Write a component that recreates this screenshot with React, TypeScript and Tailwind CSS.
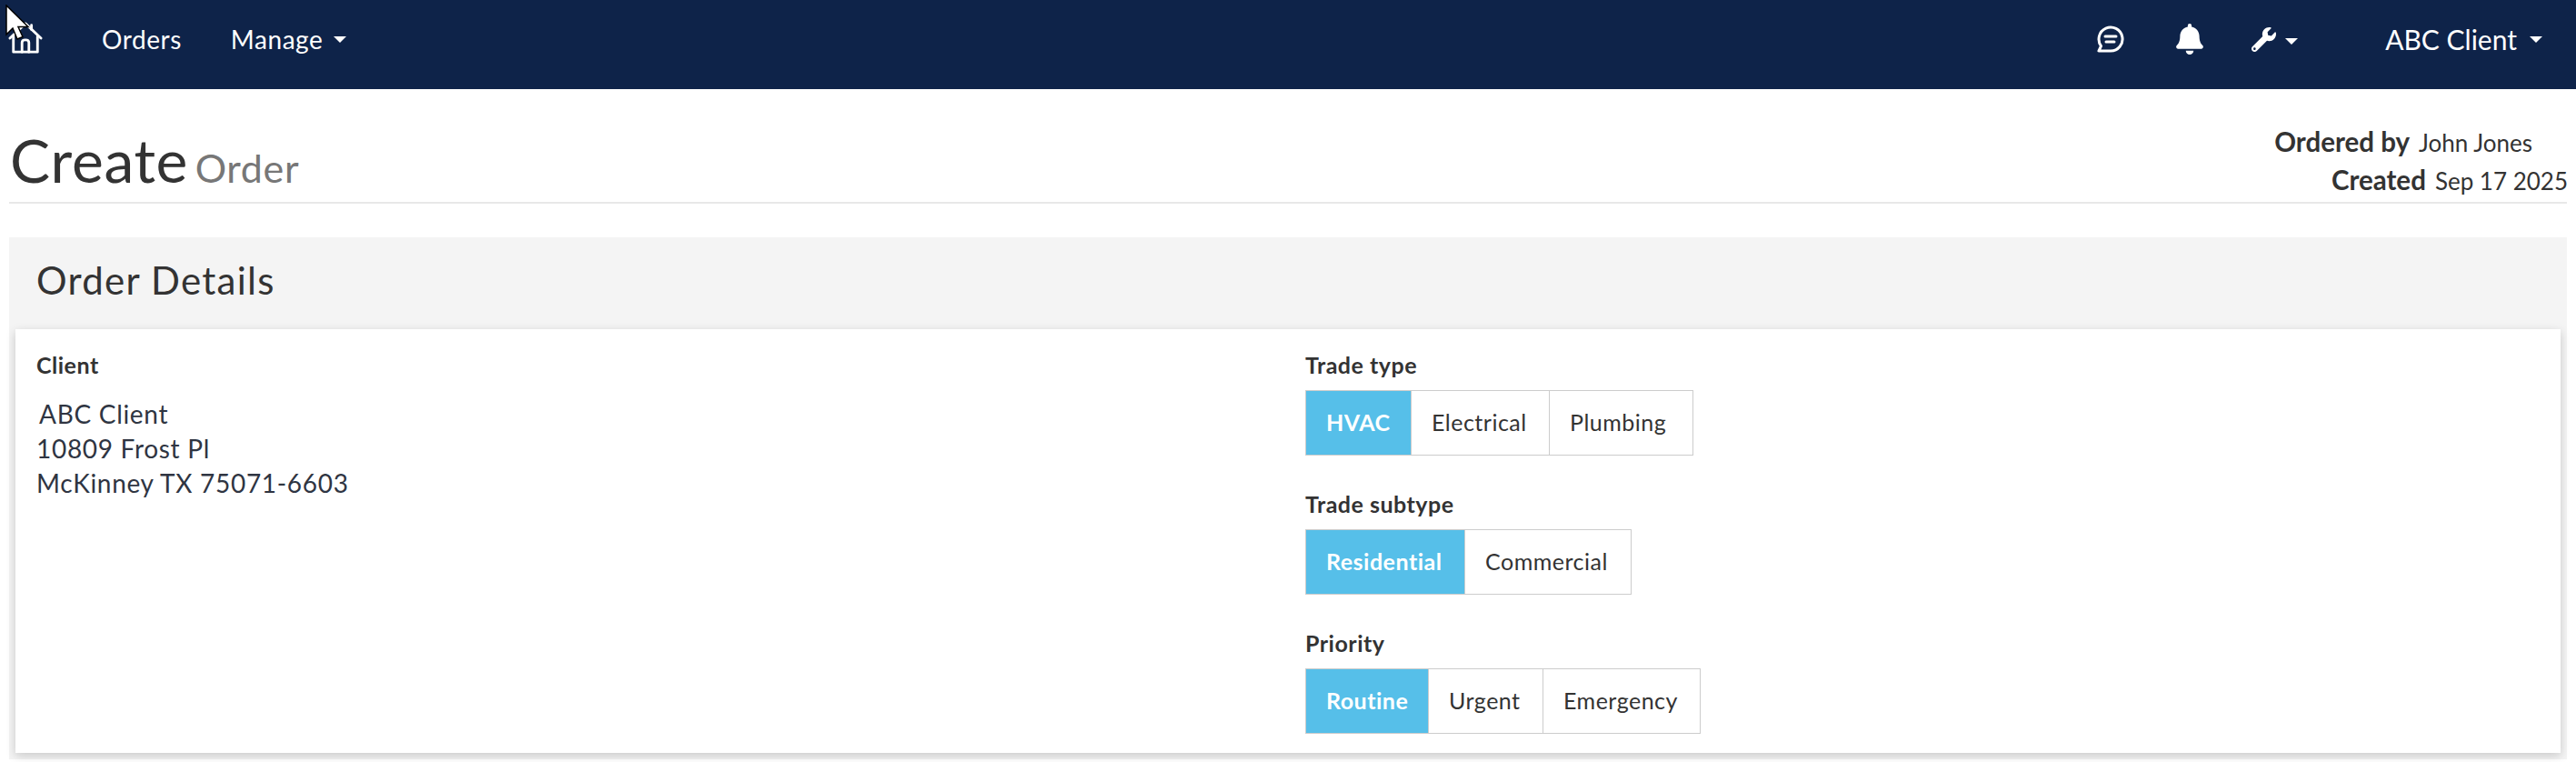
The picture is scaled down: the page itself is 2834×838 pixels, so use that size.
import { FaBell, FaWrench } from "react-icons/fa";

const GROUPS = [
  {
    label: "Trade type",
    options: [
      { name: "HVAC", w: "w-[117px]" },
      { name: "Electrical", w: "w-[153px]" },
      { name: "Plumbing", w: "w-[159px]" },
    ],
  },
  {
    label: "Trade subtype",
    options: [
      { name: "Residential", w: "w-[176px]" },
      { name: "Commercial", w: "w-[184px]" },
    ],
  },
  {
    label: "Priority",
    options: [
      { name: "Routine", w: "w-[136px]" },
      { name: "Urgent", w: "w-[127px]" },
      { name: "Emergency", w: "w-[174px]" },
    ],
  },
];

function Caret() {
  return <span className="inline-block w-0 h-0 border-x-[7px] border-x-transparent border-t-[7px] border-t-white" />;
}

function HomeIcon() {
  return (
    <svg width="38" height="36" viewBox="0 0 40 38" fill="none" stroke="white" strokeWidth="3" strokeLinecap="round" strokeLinejoin="round">
      <path d="M2 19 L20 2 L38 19" />
      <path d="M6 17 V35 H34 V17" />
      <path d="M16 35 V24 Q16 21 20 21 Q24 21 24 24 V35" />
      <path d="M27 4 V9" />
    </svg>
  );
}

function ChatIcon() {
  return (
    <svg width="30" height="30" viewBox="0 0 30 30" fill="none" stroke="white" strokeWidth="3" strokeLinecap="round" strokeLinejoin="round">
      <path d="M2 28 H15 A13 13 0 1 0 4.5 22.6 Z" />
      <path d="M9 12 H21" />
      <path d="M10 18 H19" />
    </svg>
  );
}

function Cursor() {
  return (
    <svg className="absolute top-[5px] left-[5px]" width="30" height="40" viewBox="0 0 30 40">
      <path d="M2 1 V33 L9 26 L14 38 L20 35.5 L15 24.5 L26 24.5 Z" fill="white" stroke="black" strokeWidth="1.5" />
    </svg>
  );
}

export default function App() {
  return (
    <div className="relative min-h-[838px] bg-white text-[#333] font-['Lato','Noto_Sans',sans-serif] overflow-hidden">
      <nav className="h-[98px] bg-[#0e2349] text-white flex items-start pl-[9px] pr-[37px] pt-[25px]">
        <div className="-mt-px">
          <HomeIcon />
        </div>
        <a className="ml-[65px] text-[28px] leading-[36px] tracking-[0.02em]">Orders</a>
        <a className="ml-[54px] text-[28px] leading-[36px] tracking-[0.02em] flex items-center gap-[12px]">
          Manage <Caret />
        </a>
        <div className="ml-auto flex items-center h-[36px]">
          <ChatIcon />
          <FaBell className="ml-[55px] text-[34px]" />
          <FaWrench className="ml-[51px] text-[27px]" />
          <span className="ml-[10px]"><Caret /></span>
          <span className="ml-[96px] text-[30px] leading-[36px] flex items-center gap-[14px]">
            ABC Client <Caret />
          </span>
        </div>
      </nav>

      <header className="mx-[10px] h-[126px] border-b-2 border-[#e8e8e8] flex justify-between">
        <h1 className="pt-[41px] pl-[1px] text-[66px] leading-[74px] tracking-[0.01em]">
          Create <small className="text-[43px] -ml-[10px] text-[#777]">Order</small>
        </h1>
        <div className="pt-[40px] text-right whitespace-nowrap -mr-px">
          <div className="h-[42px] pr-[39px] text-[26px] leading-[36px]">
            <b className="text-[29.5px] mr-[10px]">Ordered by</b>John Jones
          </div>
          <div className="text-[26px] leading-[36px]">
            <b className="text-[29.5px] mr-[10px]">Created</b>Sep 17 2025
          </div>
        </div>
      </header>

      <section className="mx-[10px] mt-[37px] h-[574px] bg-[#f4f4f4] px-[7px] pb-[7px] flex flex-col">
        <h2 className="h-[101px] pl-[23px] pt-[23px] text-[42px] leading-[48px] tracking-[0.03em]">Order Details</h2>
        <div className="flex-1 bg-white shadow-[0_3px_10px_rgba(0,0,0,0.18)] pl-[23px] pt-[24px] flex">
          <div className="w-[1396px]">
            <div className="h-[30px] text-[25px] leading-[30px] font-bold tracking-[0.02em]">Client</div>
            <div className="mt-[20px] text-[28px] leading-[38px] tracking-[0.025em] text-[#2f3542]">
              <div className="pl-[3px]">ABC Client</div>
              <div>10809 Frost Pl</div>
              <div>McKinney TX 75071-6603</div>
            </div>
          </div>
          <div className="flex flex-col gap-[38px]">
            {GROUPS.map((g) => (
              <div key={g.label}>
                <div className="h-[30px] text-[25px] leading-[30px] font-bold tracking-[0.02em]">{g.label}</div>
                <div className="mt-[13px] flex">
                  {g.options.map((o, i) => (
                    <div
                      key={o.name}
                      className={`${o.w} h-[72px] pl-[22px] flex items-center text-[25px] tracking-[0.02em] border border-[#ccc] -ml-px first:ml-0 ${
                        i === 0 ? "bg-[#56bfe9] text-white font-bold" : "bg-white"
                      }`}
                    >
                      {o.name}
                    </div>
                  ))}
                </div>
              </div>
            ))}
          </div>
        </div>
      </section>
      <Cursor />
    </div>
  );
}
